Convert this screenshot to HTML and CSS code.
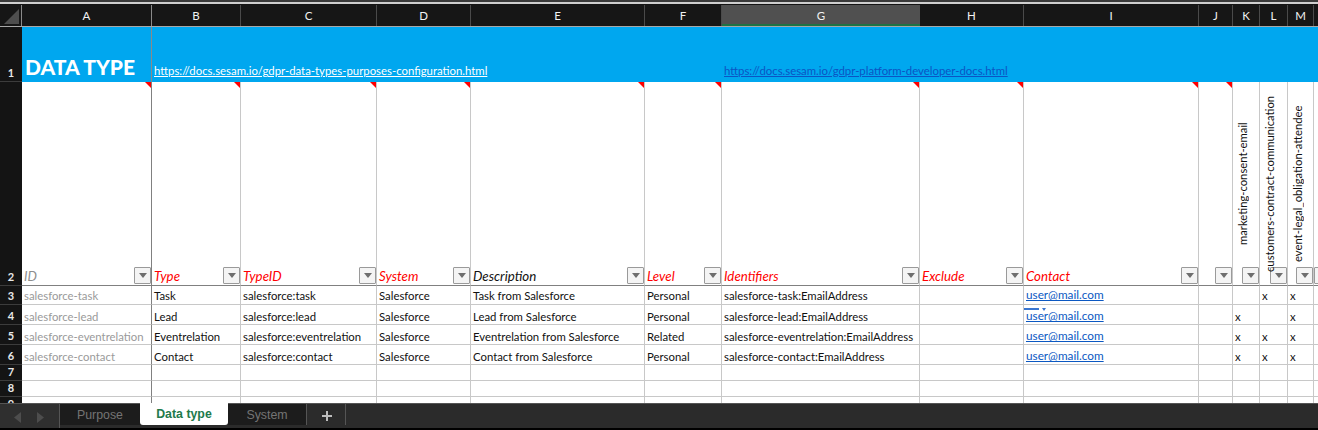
FILE: index.html
```html
<!DOCTYPE html>
<html lang="en">
<head>
<meta charset="utf-8">
<title>Data type</title>
<link rel="stylesheet" href="styles.css">
</head>
<body>
<div class="app">
  <div class="top-strip"></div>
  <div class="row cols">
    <div class="corner"><span class="corner-mark"></span></div>
    <div class="col">A</div><div class="col">B</div><div class="col">C</div><div class="col">D</div><div class="col">E</div><div class="col">F</div><div class="col col-sel">G</div><div class="col">H</div><div class="col">I</div><div class="col">J</div><div class="col">K</div><div class="col">L</div><div class="col">M</div><div class="col"></div>
  </div>
  <div class="row r1">
    <div class="rh">1</div>
    <div class="banner-a">DATA TYPE</div>
    <div class="banner-b"><a class="link-white">https://docs.sesam.io/gdpr-data-types-purposes-configuration.html</a></div>
    <div class="banner-c"><a class="link-blue">https://docs.sesam.io/gdpr-platform-developer-docs.html</a></div>
  </div>
  <div class="row r2">
    <div class="rh">2</div>
    <div class="hc freeze note"><span class="ht grey">ID</span><i class="fb"></i></div>
    <div class="hc note"><span class="ht red">Type</span><i class="fb"></i></div>
    <div class="hc note"><span class="ht red">TypeID</span><i class="fb"></i></div>
    <div class="hc note"><span class="ht red">System</span><i class="fb"></i></div>
    <div class="hc note"><span class="ht">Description</span><i class="fb"></i></div>
    <div class="hc note"><span class="ht red">Level</span><i class="fb"></i></div>
    <div class="hc note"><span class="ht red">Identifiers</span><i class="fb"></i></div>
    <div class="hc note"><span class="ht red">Exclude</span><i class="fb"></i></div>
    <div class="hc note"><span class="ht red">Contact</span><i class="fb"></i></div>
    <div class="hc note"><i class="fb"></i></div>
    <div class="hc"><i class="fb"></i><span class="vt">marketing-consent-email</span></div>
    <div class="hc"><i class="fb"></i><span class="vt">customers-contract-communication</span></div>
    <div class="hc"><i class="fb"></i><span class="vt">event-legal_obligation-attendee</span></div>
    <div class="hc hc-n"><i class="fb"></i></div>
  </div>
  <div class="row r3">
    <div class="rh">3</div>
    <div class="c freeze grey">salesforce-task</div><div class="c">Task</div><div class="c">salesforce:task</div><div class="c">Salesforce</div><div class="c">Task from Salesforce</div><div class="c">Personal</div><div class="c">salesforce-task:EmailAddress</div><div class="c"></div><div class="c"><a class="mail">user@mail.com</a></div><div class="c"></div><div class="c"></div><div class="c">x</div><div class="c">x</div><div class="c"></div>
  </div>
  <div class="row r5">
    <div class="rh">4</div>
    <div class="c freeze grey">salesforce-lead</div><div class="c">Lead</div><div class="c">salesforce:lead</div><div class="c">Salesforce</div><div class="c">Lead from Salesforce</div><div class="c">Personal</div><div class="c">salesforce-lead:EmailAddress</div><div class="c"></div><div class="c"><span class="smart-tag"></span><a class="mail">user@mail.com</a></div><div class="c"></div><div class="c">x</div><div class="c"></div><div class="c">x</div><div class="c"></div>
  </div>
  <div class="row r5">
    <div class="rh">5</div>
    <div class="c freeze grey">salesforce-eventrelation</div><div class="c">Eventrelation</div><div class="c">salesforce:eventrelation</div><div class="c">Salesforce</div><div class="c">Eventrelation from Salesforce</div><div class="c">Related</div><div class="c">salesforce-eventrelation:EmailAddress</div><div class="c"></div><div class="c"><a class="mail">user@mail.com</a></div><div class="c"></div><div class="c">x</div><div class="c">x</div><div class="c">x</div><div class="c"></div>
  </div>
  <div class="row r5">
    <div class="rh">6</div>
    <div class="c freeze grey">salesforce-contact</div><div class="c">Contact</div><div class="c">salesforce:contact</div><div class="c">Salesforce</div><div class="c">Contact from Salesforce</div><div class="c">Personal</div><div class="c">salesforce-contact:EmailAddress</div><div class="c"></div><div class="c"><a class="mail">user@mail.com</a></div><div class="c"></div><div class="c">x</div><div class="c">x</div><div class="c">x</div><div class="c"></div>
  </div>
  <div class="row r7">
    <div class="rh">7</div>
    <div class="c freeze"></div><div class="c"></div><div class="c"></div><div class="c"></div><div class="c"></div><div class="c"></div><div class="c"></div><div class="c"></div><div class="c"></div><div class="c"></div><div class="c"></div><div class="c"></div><div class="c"></div><div class="c"></div>
  </div>
  <div class="row r7">
    <div class="rh">8</div>
    <div class="c freeze"></div><div class="c"></div><div class="c"></div><div class="c"></div><div class="c"></div><div class="c"></div><div class="c"></div><div class="c"></div><div class="c"></div><div class="c"></div><div class="c"></div><div class="c"></div><div class="c"></div><div class="c"></div>
  </div>
  <div class="row r9">
    <div class="rh">9</div>
    <div class="c freeze"></div><div class="c"></div><div class="c"></div><div class="c"></div><div class="c"></div><div class="c"></div><div class="c"></div><div class="c"></div><div class="c"></div><div class="c"></div><div class="c"></div><div class="c"></div><div class="c"></div><div class="c"></div>
  </div>
  <div class="tabbar">
    <div class="nav">
      <svg class="nav-icon" width="30" height="11" viewBox="0 0 30 11"><path d="M7 0v11L0 5.5z" fill="#4d4d4d"/><path d="M23 0v11l7-5.5z" fill="#4d4d4d"/></svg>
    </div>
    <div class="tab tab-purpose">Purpose</div>
    <div class="tab tab-active">Data type</div>
    <div class="tab tab-system">System</div>
    <div class="tab-add">
      <svg class="add-icon" width="12" height="12" viewBox="0 0 12 12"><path d="M5 1h2v4h4v2H7v4H5V7H1V5h4z" fill="#bdbdbd"/></svg>
    </div>
  </div>
  <div class="bottom-strip"></div>
</div>
</body>
</html>
```
FILE: styles.css
```css
* { box-sizing: border-box; }
html, body { margin: 0; height: 100%; background: #000; overflow: hidden; }
.app { width: 1318px; height: 430px; overflow: hidden; display: flex; flex-direction: column; font-family: Lato, "Liberation Sans", sans-serif; font-size: 11.35px; color: #111; }
.top-strip { height: 5px; flex: none; background: #2e2e2e; border-top: 2px solid #3a3a3a; border-bottom: 1px solid #141414; box-shadow: inset 0 1px 0 #cfcfcf, inset 0 2px 0 #cfcfcf; }
.row { display: grid; flex: none; width: 1332px; grid-template-columns: 22px 130px 89px 136px 94px 174px 77px 198px 104px 175px 34px 27px 28px 26px 18px; background: #fff; }
.cols { height: 22px; background: #161616; border-bottom: 1px solid #a8a8a8; }
.corner { background: #161616; border-right: 1px solid #8a8a8a; position: relative; }
.corner-mark { display: block; width: 0; height: 0; margin: 4px 0 0 4px; border-style: solid; border-width: 0 0 15px 15px; border-color: transparent transparent #4e4e4e transparent; }
.col { color: #f2f2f2; display: flex; align-items: center; justify-content: center; border-right: 1px solid #4a4a4a; font-size: 11.5px; font-weight: 400; padding-bottom: 1px; }
.col:nth-child(2) { border-right-color: #8a8a8a; }
.col-sel { background: #505050; box-shadow: inset 0 -2px 0 #1f7244; border-right: 0; }
.r1 { height: 55px; background: #00a7ef; }
.r1 .rh { grid-column: 1; }
.banner-a { grid-column: 2; border-right: 1px solid #8a8a8a; color: #fff; font-size: 21px; font-weight: 900; display: flex; align-items: flex-end; padding: 0 0 0 3px; line-height: 30px; }
.banner-b { grid-column: 3 / 8; display: flex; align-items: flex-end; padding: 0 0 4px 2px; }
.banner-c { grid-column: 8 / 16; display: flex; align-items: flex-end; padding: 0 0 4px 2px; }
.link-white { color: #fff; text-decoration: underline; font-size: 11.36px; line-height: 15px; }
.link-blue { color: #0b55c4; text-decoration: underline; font-size: 11.38px; line-height: 15px; }
.rh { background: #141414; color: #e8e8e8; font-weight: 700; font-size: 11px; display: flex; align-items: flex-end; justify-content: center; border-bottom: 1px solid #3c3c3c; padding-bottom: 1px; line-height: 14px; }
.r2 { height: 204px; }
.hc { position: relative; display: flex; align-items: flex-end; justify-content: space-between; border-right: 1px solid #c8c8c8; border-bottom: 1px solid #808080; padding: 0 0 0 2px; min-width: 0; }
.ht { font-size: 13.3px; font-style: italic; line-height: 18px; color: #111; white-space: nowrap; }
.ht.grey { color: #8e8e8e; }
.ht.red { color: #ff0000; }
.fb { position: relative; margin: 0 0 1px auto; flex: none; width: 17px; height: 17px; background: #f4f4f4; border: 1px solid #9a9a9a; border-radius: 1px; display: flex; align-items: center; justify-content: center; }
.fb::after { content: ""; width: 0; height: 0; border-style: solid; border-width: 5px 4.5px 0 4.5px; border-color: #6e6e6e transparent transparent transparent; }
.note::before { content: ""; position: absolute; top: 0; right: 0; width: 0; height: 0; border-style: solid; border-width: 0 6px 6px 0; border-color: transparent #ff0000 transparent transparent; }
.hc-n { padding-left: 0; }
.vt { position: absolute; left: 3px; top: 0; bottom: 0; z-index: 1; display: flex; align-items: center; justify-content: center; writing-mode: vertical-rl; transform: rotate(180deg); font-size: 11.25px; white-space: nowrap; line-height: 14px; width: 14px; color: #111; }
.c { position: relative; border-right: 1px solid #c8c8c8; border-bottom: 1px solid #c8c8c8; padding: 0 2px; line-height: 14px; white-space: nowrap; display: flex; align-items: flex-end; }
.c.grey { color: #9a9a9a; }
.freeze { border-right: 1px solid #808080; }
.r3 { height: 19px; }
.r3 .c { padding-bottom: 1px; }
.r5 { height: 20px; }
.r7 { height: 16px; }
.r9 { height: 6px; overflow: hidden; }
.r9 .c { border-bottom: 0; }
.r9 .rh { border-bottom: 0; }
.mail { color: #0b58c2; text-decoration: underline; font-size: 11.75px; margin-bottom: 1px; }
.smart-tag { position: absolute; left: 0; top: 3px; width: 15px; height: 2px; background: #3a76d0; }
.smart-tag::after { content: ""; position: absolute; left: 18px; top: 0; width: 0; height: 0; border-style: solid; border-width: 3px 2.5px 0 2.5px; border-color: #3a76d0 transparent transparent transparent; }
.tabbar { height: 25px; flex: none; display: flex; background: #2b2b2b; border-top: 1px solid #555; }
.nav { width: 60px; background: #2f2f2f; border-right: 1px solid #555; display: flex; align-items: center; padding-left: 14px; }
.nav-icon { display: block; margin-top: 3px; }
.tab { display: flex; align-items: center; justify-content: center; font-family: "Liberation Sans", Arial, sans-serif; font-size: 12.35px; margin-bottom: 3px; background: #1c1c1c; color: #747474; }
.tab-purpose { width: 80px; }
.tab-active { width: 88px; background: #fff; color: #217a4b; font-weight: 700; border-radius: 0 0 3px 3px; margin-top: -1px; }
.tab-system { width: 79px; border-right: 1px solid #555; }
.tab-add { width: 39px; margin-bottom: 3px; display: flex; align-items: center; justify-content: center; border-right: 1px solid #555; }
.add-icon { display: block; margin: 2px 0 0 1px; }
.bottom-strip { flex: 1; background: #000; }
```
